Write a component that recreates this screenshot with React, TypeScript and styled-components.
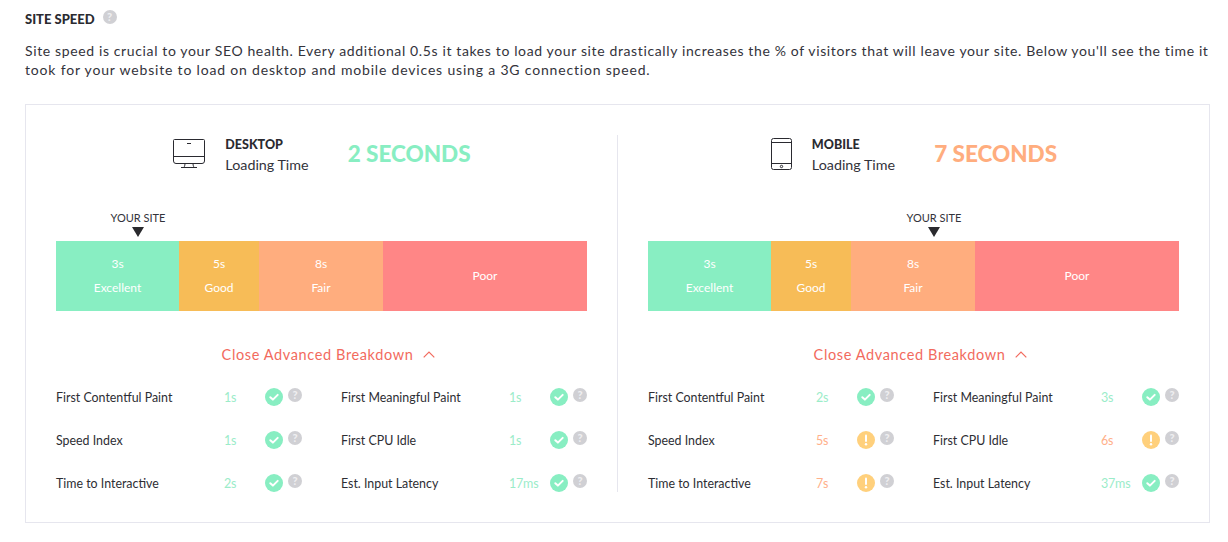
import React from "react";
import styled, { createGlobalStyle } from "styled-components";

const Global = createGlobalStyle`
  html, body { margin: 0; padding: 0; background: #fff; }
  body { font-family: "Lato", "Noto Sans", sans-serif; color: #2d2d33; }
`;

type Tone = "green" | "amber" | "orange" | "red";
const tones: Record<Tone, string> = { green: "#88eec2", amber: "#f7bc57", orange: "#ffad7e", red: "#ff8686" };

const Page = styled.div`
  width: 1228px;
  height: 542px;
  box-sizing: border-box;
  padding: 9px 18px 0 25px;
  overflow: hidden;
`;
const TitleRow = styled.div`
  display: flex;
  align-items: flex-start;
  gap: 12px;
  height: 21px;
`;
const Title = styled.h2`
  margin: 0;
  font-size: 13px;
  line-height: 20px;
  font-weight: 900;
  color: #2a2a30;
`;
const Intro = styled.p`
  margin: 11px 0 0;
  width: 1190px;
  height: 39px;
  font-size: 14px;
  line-height: 19px;
  color: #33333b;
`;
const IntroLine = styled.span<{ $tracking: number }>`
  display: block;
  white-space: nowrap;
  letter-spacing: ${(p) => p.$tracking}px;
`;
const Card = styled.section`
  margin-top: 24px;
  width: 1185px;
  height: 419px;
  box-sizing: border-box;
  border: 1px solid #e6e6ee;
  padding: 30px;
  display: grid;
  grid-template-columns: 562px 561px;
`;
const Panel = styled.div<{ $first?: boolean }>`
  height: 357px;
  ${(p) => (p.$first ? "padding-right: 30px; border-right: 1px solid #e6e6ee;" : "padding-left: 30px;")}
`;
const Header = styled.div`
  display: flex;
  align-items: center;
  justify-content: center;
  height: 37px;
  padding-left: 1px;
`;
const DeviceIcon = styled.svg`
  flex: none;
  display: block;
  margin-right: 20px;
`;
const DeviceText = styled.div`
  margin-right: 39px;
`;
const DeviceName = styled.div`
  padding-top: 2px;
  font-size: 12.5px;
  line-height: 20px;
  font-weight: 900;
  color: #2a2a30;
`;
const DeviceSub = styled.div`
  font-size: 14.3px;
  line-height: 19px;
  color: #33333b;
`;
const Seconds = styled.div<{ $tone: Tone }>`
  font-size: 22.5px;
  font-weight: 900;
  line-height: 30px;
  color: ${(p) => tones[p.$tone]};
`;
const MarkerRow = styled.div<{ $offset: number }>`
  margin-top: 37px;
  padding-left: ${(p) => p.$offset}px;
  height: 32px;
`;
const Marker = styled.div`
  width: 60px;
  display: flex;
  flex-direction: column;
  align-items: center;
`;
const MarkerLabel = styled.div`
  padding-top: 1px;
  font-size: 11px;
  line-height: 15px;
  color: #33333b;
  white-space: nowrap;
`;
const MarkerArrow = styled.div`
  margin-top: 2px;
  width: 0;
  height: 0;
  border-left: 6px solid transparent;
  border-right: 6px solid transparent;
  border-top: 10px solid #2a2a2e;
`;
const Bar = styled.div`
  display: flex;
  height: 70px;
`;
const Segment = styled.div<{ $tone: Tone; $width: number }>`
  width: ${(p) => p.$width}px;
  flex: ${(p) => (p.$tone === "red" ? "1" : "none")};
  background: ${(p) => tones[p.$tone]};
  display: flex;
  flex-direction: column;
  align-items: center;
  justify-content: center;
  color: #fff;
  font-size: 12px;
  line-height: 24px;
`;
const Toggle = styled.div`
  margin-top: 32px;
  height: 22px;
  padding-left: 14px;
  display: flex;
  align-items: center;
  justify-content: center;
  gap: 10px;
  font-size: 14.5px;
  letter-spacing: 0.62px;
  color: #f26a5d;
`;
const Metrics = styled.div`
  margin-top: 22px;
  display: grid;
  grid-template-columns: 246px 246px;
  column-gap: 39px;
  grid-auto-rows: 43px;
`;
const Metric = styled.div`
  display: flex;
  align-items: center;
  height: 20px;
`;
const MetricLabel = styled.div`
  width: 168px;
  font-size: 12.4px;
  color: #2d2d33;
  white-space: nowrap;
`;
const MetricValue = styled.div<{ $tone: Tone }>`
  width: 41px;
  font-size: 12.5px;
  letter-spacing: -0.2px;
  color: ${(p) => (p.$tone === "green" ? "#9becc9" : "#ffb08a")};
`;
const Status = styled.svg`
  display: block;
  flex: none;
`;
const Help = styled.span`
  flex: none;
  width: 14px;
  height: 14px;
  margin-left: 5px;
  margin-bottom: 4px;
  border-radius: 50%;
  background: #d0d0d4;
  color: #eeeef0;
  font-size: 11px;
  font-weight: 900;
  line-height: 14px;
  text-align: center;
`;
const TitleHelp = styled(Help)`
  margin: 1px 0 0 -4px;
`;

const Desktop = () => (
  <DeviceIcon width="32" height="30" viewBox="0 0 32 30" fill="none" stroke="#2a2a30" strokeWidth="1">
    <path d="M1.5 0.5H30.5A1 1 0 0 1 31.5 1.5V22a2.5 2.5 0 0 1-2.5 2.5H3A2.5 2.5 0 0 1 .5 22V1.5a1 1 0 0 1 1-1Z" />
    <path d="M.5 17.5H31.5M14 4.5H18M8 28.5H24" />
    <path d="M12 24.5c0 2.5-1 4-1.5 4M20 24.5c0 2.5 1 4 1.5 4" />
  </DeviceIcon>
);
const Mobile = () => (
  <DeviceIcon width="21" height="32" viewBox="0 0 21 32" fill="none" stroke="#2a2a30" strokeWidth="1">
    <rect x="0.5" y="0.5" width="20" height="31" rx="2" />
    <path d="M.5 4.5H20.5M.5 25.5H20.5" />
    <circle cx="10.5" cy="28.5" r="1.2" />
  </DeviceIcon>
);
const Good = () => (
  <Status width="18" height="18" viewBox="0 0 18 18">
    <circle cx="9" cy="9" r="9" fill="#88eec2" />
    <path d="M5.3 9.2 7.9 11.6 12.7 6.9" fill="none" stroke="#fff" strokeWidth="2" strokeLinecap="round" strokeLinejoin="round" />
  </Status>
);
const Warn = () => (
  <Status width="18" height="18" viewBox="0 0 18 18">
    <circle cx="9" cy="9" r="9" fill="#ffd07c" />
    <rect x="8" y="3.6" width="2" height="7.4" rx="1" fill="#fff" />
    <circle cx="9" cy="13.2" r="1.2" fill="#fff" />
  </Status>
);
const Chevron = () => (
  <svg width="12" height="7" viewBox="0 0 12 7" fill="none" stroke="#f26a5d" strokeWidth="1.2">
    <path d="M.7 6.3 6 1 11.3 6.3" />
  </svg>
);

type Row = [string, string, Tone, boolean];
const desktop: Row[] = [
  ["First Contentful Paint", "1s", "green", true],
  ["First Meaningful Paint", "1s", "green", true],
  ["Speed Index", "1s", "green", true],
  ["First CPU Idle", "1s", "green", true],
  ["Time to Interactive", "2s", "green", true],
  ["Est. Input Latency", "17ms", "green", true],
];
const mobile: Row[] = [
  ["First Contentful Paint", "2s", "green", true],
  ["First Meaningful Paint", "3s", "green", true],
  ["Speed Index", "5s", "amber", false],
  ["First CPU Idle", "6s", "orange", false],
  ["Time to Interactive", "7s", "orange", false],
  ["Est. Input Latency", "37ms", "green", true],
];

const DevicePanel = ({ first, name, seconds, tone, offset, rows }: { first?: boolean; name: string; seconds: string; tone: Tone; offset: number; rows: Row[] }) => (
  <Panel $first={first}>
    <Header>
      {first ? <Desktop /> : <Mobile />}
      <DeviceText>
        <DeviceName>{name}</DeviceName>
        <DeviceSub>Loading Time</DeviceSub>
      </DeviceText>
      <Seconds $tone={tone}>{seconds}</Seconds>
    </Header>
    <MarkerRow $offset={offset}>
      <Marker>
        <MarkerLabel>YOUR SITE</MarkerLabel>
        <MarkerArrow />
      </Marker>
    </MarkerRow>
    <Bar>
      <Segment $tone="green" $width={123}><span>3s</span><span>Excellent</span></Segment>
      <Segment $tone="amber" $width={80}><span>5s</span><span>Good</span></Segment>
      <Segment $tone="orange" $width={124}><span>8s</span><span>Fair</span></Segment>
      <Segment $tone="red" $width={204}><span>Poor</span></Segment>
    </Bar>
    <Toggle>
      Close Advanced Breakdown <Chevron />
    </Toggle>
    <Metrics>
      {rows.map(([label, value, t, ok]) => (
        <Metric key={label}>
          <MetricLabel>{label}</MetricLabel>
          <MetricValue $tone={t}>{value}</MetricValue>
          {ok ? <Good /> : <Warn />}
          <Help>?</Help>
        </Metric>
      ))}
    </Metrics>
  </Panel>
);

export default function App() {
  return (
    <Page>
      <Global />
      <TitleRow>
        <Title>SITE SPEED</Title>
        <TitleHelp>?</TitleHelp>
      </TitleRow>
      <Intro>
        <IntroLine $tracking={0.63}>Site speed is crucial to your SEO health. Every additional 0.5s it takes to load your site drastically increases the % of visitors that will leave your site. Below you'll see the time it</IntroLine>
        <IntroLine $tracking={0.82}>took for your website to load on desktop and mobile devices using a 3G connection speed.</IntroLine>
      </Intro>
      <Card>
        <DevicePanel first name="DESKTOP" seconds="2 SECONDS" tone="green" offset={52} rows={desktop} />
        <DevicePanel name="MOBILE" seconds="7 SECONDS" tone="orange" offset={256} rows={mobile} />
      </Card>
    </Page>
  );
}
